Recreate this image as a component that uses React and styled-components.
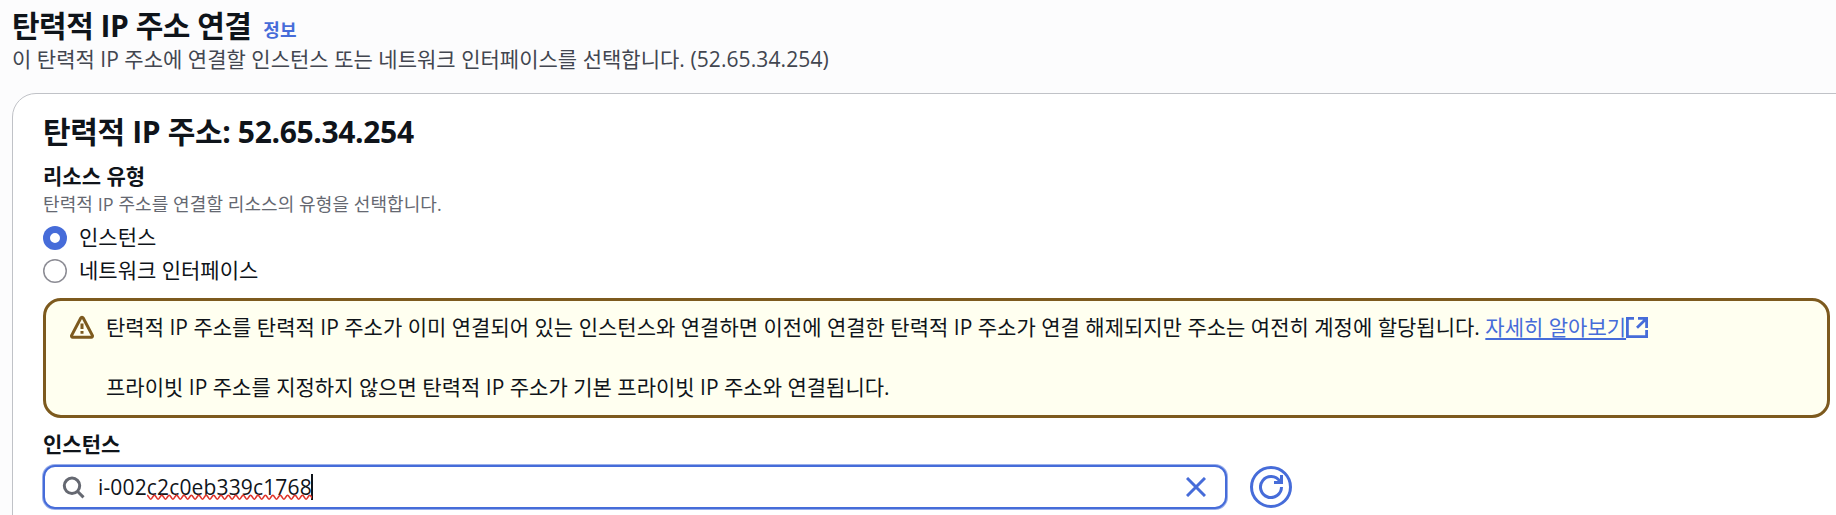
import React from "react";
import styled, { createGlobalStyle } from "styled-components";

const Global = createGlobalStyle`
  *, *::before, *::after { box-sizing: border-box; }
  html, body { margin: 0; background: #fcfcfd; overflow: hidden; }
  body {
    font-family: "Open Sans", "Noto Sans CJK KR", sans-serif;
    font-size: 21px;
    line-height: 30px;
    color: #0f141a;
  }
  h1, h2, p { margin: 0; }
`;

const Page = styled.main`
  width: 1860px;
  height: 515px;
  padding: 8px 0 0 12px;
  overflow: hidden;
`;

const Header = styled.header`
  display: flex;
  flex-direction: column;
  height: 85px;
`;

const TitleRow = styled.div`
  display: flex;
  align-items: baseline;
  gap: 12px;
`;

const Title = styled.h1`
  font-size: 30px;
  line-height: 36px;
  font-weight: 700;
  letter-spacing: -0.5px;
`;

const InfoLink = styled.a`
  font-size: 18px;
  line-height: 24px;
  font-weight: 700;
  color: #466cd9;
`;

const Description = styled.p`
  color: #424650;
  letter-spacing: 0.02px;
`;

const Address = styled.span`
  letter-spacing: 0.1px;
`;

const Panel = styled.section`
  display: flex;
  flex-direction: column;
  width: 1848px;
  height: 480px;
  padding: 20px 17px 0 30px;
  border: 1px solid #c0c2c7;
  border-radius: 24px;
  background: #fff;
`;

const PanelTitle = styled.h2`
  font-size: 30px;
  line-height: 36px;
  font-weight: 700;
  letter-spacing: -0.35px;
`;

const FieldLabel = styled.div`
  margin-top: 11px;
  font-weight: 700;
`;

const Hint = styled.p`
  margin-top: 1px;
  font-size: 18px;
  line-height: 24px;
  letter-spacing: 0.08px;
  color: #656871;
`;

const RadioGroup = styled.div`
  display: flex;
  flex-direction: column;
  gap: 3px;
  margin-top: 6px;
`;

const RadioRow = styled.label`
  display: flex;
  align-items: center;
  gap: 12px;
  height: 30px;
`;

const RadioDot = styled.span`
  width: 24px;
  height: 24px;
  margin-top: 2px;
  border-radius: 50%;
  background: #fff;
  box-shadow: inset 0 0 0 ${(p) => (p.$checked ? "7px #466cd9" : "1.5px #8c8c94")};
`;

const Alert = styled.div`
  display: flex;
  gap: 12px;
  width: 1787px;
  height: 120px;
  margin-top: 13px;
  padding: 11px 24px;
  border: 3px solid #7d5a1e;
  border-radius: 18px;
  background: #fffff0;
`;

const AlertIcon = styled.svg`
  flex: none;
  margin-top: 3px;
`;

const AlertText = styled.div`
  display: flex;
  flex-direction: column;
  gap: 30px;
  white-space: nowrap;
  letter-spacing: 0.005px;
`;

const LearnMore = styled.a`
  color: #466cd9;
  text-decoration: underline;
  text-decoration-thickness: 2px;
  text-underline-offset: 3px;
`;

const ExternalIcon = styled.svg`
  vertical-align: -3px;
`;

const SearchRow = styled.div`
  display: flex;
  align-items: center;
  gap: 23px;
  margin-top: 6px;
`;

const SearchBox = styled.div`
  display: flex;
  align-items: center;
  width: 1184px;
  height: 44px;
  padding: 0 19px 0 17px;
  border: 2px solid #466cd9;
  border-radius: 12px;
  box-shadow: 0 0 0 1px rgba(70, 108, 217, 0.55);
  background: #fff;
`;

const Query = styled.span`
  display: flex;
  flex: 1;
  align-items: center;
  margin-left: 12px;
  letter-spacing: 0.15px;
`;

const Misspelled = styled.span`
  position: relative;
  display: inline-block;
`;

const SquiggleLine = styled.svg`
  position: absolute;
  left: 0;
  top: 22px;
  width: 100%;
  height: 7px;
`;

const Caret = styled.span`
  width: 2px;
  height: 26px;
  margin-left: -1px;
  background: #0f141a;
`;

const RefreshButton = styled.button`
  display: flex;
  align-items: center;
  justify-content: center;
  width: 42px;
  height: 42px;
  padding: 0;
  border: 3px solid #466cd9;
  border-radius: 50%;
  background: #fff;
`;

const WarningIcon = () => (
  <AlertIcon width="24" height="24" viewBox="0 0 16 16" fill="none" stroke="#7d5a1e" strokeWidth="2" strokeLinejoin="round">
    <path d="M7.2 2 1.1 13.6c-.25.6.1 1.2.7 1.2h12.4c.6 0 .95-.6.7-1.2L8.8 2a.9.9 0 0 0-1.6 0Z" />
    <path d="M8 5.6v3.8M8 10.6v1.9" />
  </AlertIcon>
);

const OpenExternal = () => (
  <ExternalIcon width="22" height="21" viewBox="0 0 22 21" fill="none" stroke="#466cd9" strokeWidth="2.8">
    <path d="M8 1.4H1.4v18.2h19.2V13M12 1.4h8.6V11M20 2l-9 8.8" />
  </ExternalIcon>
);

const SearchIcon = () => (
  <svg width="24" height="24" viewBox="0 0 24 24" fill="none" stroke="#656871" strokeWidth="3">
    <circle cx="10" cy="10.8" r="7.7" />
    <path d="m15.4 16.2 6.1 6.200" />
  </svg>
);

const ClearIcon = () => (
  <svg width="20" height="20" viewBox="0 0 20 20" fill="none" stroke="#466cd9" strokeWidth="3">
    <path d="m1 1 18 18M19 1 1 19" />
  </svg>
);

const RefreshIcon = () => (
  <svg width="24" height="24" viewBox="0 0 24 24" fill="none" stroke="#466cd9" strokeWidth="3">
    <path d="M22.5 12A10.5 10.5 0 1 1 20.8 6.3" />
    <path d="M22.5 0v7.5H15" />
  </svg>
);

const wave = "M0 1.2" + "c1.5 0 2.2 4 3.7 4s2.2-4 3.7-4".repeat(23);

const Squiggle = () => (
  <SquiggleLine fill="none" stroke="#e0352b" strokeWidth="1.6">
    <path d={wave} />
  </SquiggleLine>
);

export default function App() {
  return (
    <>
      <Global />
      <Page>
        <Header>
          <TitleRow>
            <Title>탄력적 IP 주소 연결</Title>
            <InfoLink>정보</InfoLink>
          </TitleRow>
          <Description>
            이 탄력적 IP 주소에 연결할 인스턴스 또는 네트워크 인터페이스를 선택합니다. <Address>(52.65.34.254)</Address>
          </Description>
        </Header>
        <Panel>
          <PanelTitle>탄력적 IP 주소: 52.65.34.254</PanelTitle>
          <FieldLabel>리소스 유형</FieldLabel>
          <Hint>탄력적 IP 주소를 연결할 리소스의 유형을 선택합니다.</Hint>
          <RadioGroup>
            <RadioRow>
              <RadioDot $checked />
              인스턴스
            </RadioRow>
            <RadioRow>
              <RadioDot />
              네트워크 인터페이스
            </RadioRow>
          </RadioGroup>
          <Alert>
            <WarningIcon />
            <AlertText>
              <p>
                탄력적 IP 주소를 탄력적 IP 주소가 이미 연결되어 있는 인스턴스와 연결하면 이전에 연결한 탄력적 IP 주소가 연결 해제되지만 주소는 여전히 계정에 할당됩니다.{" "}
                <LearnMore>자세히 알아보기</LearnMore>
                <OpenExternal />
              </p>
              <p>프라이빗 IP 주소를 지정하지 않으면 탄력적 IP 주소가 기본 프라이빗 IP 주소와 연결됩니다.</p>
            </AlertText>
          </Alert>
          <FieldLabel>인스턴스</FieldLabel>
          <SearchRow>
            <SearchBox>
              <SearchIcon />
              <Query>
                <span>
                  i-002<Misspelled>c2c0eb339c1768<Squiggle /></Misspelled>
                </span>
                <Caret />
              </Query>
              <ClearIcon />
            </SearchBox>
            <RefreshButton aria-label="새로 고침">
              <RefreshIcon />
            </RefreshButton>
          </SearchRow>
        </Panel>
      </Page>
    </>
  );
}
